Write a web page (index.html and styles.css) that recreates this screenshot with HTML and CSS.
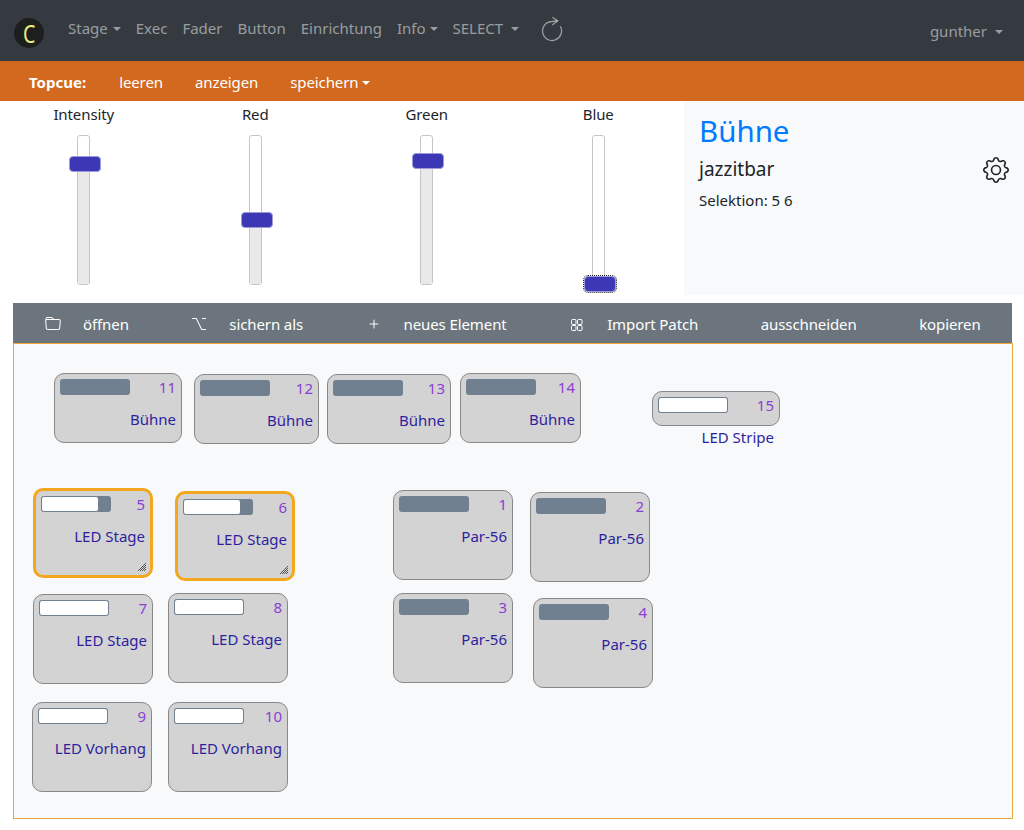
FILE: index.html
```html
<!DOCTYPE html>
<html lang="en">
<head>
    <meta charset="UTF-8">
    <meta name="viewport" content="width=device-width, initial-scale=1.0">
    <title>Bühne</title>
    <link rel="stylesheet" href="styles.css">
</head>
<body>

    <nav class="navbar">
        <span class="logo"><span>C</span></span>
        <a class="nav-link caret first">Stage</a>
        <a class="nav-link">Exec</a>
        <a class="nav-link">Fader</a>
        <a class="nav-link">Button</a>
        <a class="nav-link">Einrichtung</a>
        <a class="nav-link caret">Info</a>
        <a class="nav-link caret wide-caret">SELECT</a>
        <svg class="reload" viewBox="0 0 21 25" fill="none" stroke="currentColor" stroke-width="1.3">
            <path d="M15.500 4 10 4.500A9.500 9.500 0 1 0 18.300 9.300"/>
            <path d="M10.300.3 15.700 3.900 10.300 8"/>
        </svg>
        <a class="nav-link caret wide-caret user">gunther</a>
    </nav>

    <div class="cuebar">
        <b class="cue-title">Topcue:</b>
        <a class="cue-link">leeren</a>
        <a class="cue-link">anzeigen</a>
        <a class="cue-link caret">speichern</a>
    </div>

    <section class="controls">
        <div class="sliders">
            <div class="slider">
                <label>Intensity</label>
                <div class="track">
                    <div class="fill" style="height: 81%"></div>
                    <div class="handle" style="bottom: 81%"></div>
                </div>
            </div>
            <div class="slider">
                <label>Red</label>
                <div class="track">
                    <div class="fill" style="height: 43%"></div>
                    <div class="handle" style="bottom: 43%"></div>
                </div>
            </div>
            <div class="slider">
                <label>Green</label>
                <div class="track">
                    <div class="fill" style="height: 83%"></div>
                    <div class="handle" style="bottom: 83%"></div>
                </div>
            </div>
            <div class="slider">
                <label>Blue</label>
                <div class="track">
                    <div class="handle focused" style="bottom: 0%"></div>
                </div>
            </div>
        </div>
        <aside class="info">
            <h1>Bühne</h1>
            <div class="info-row">
                <h2>jazzitbar</h2>
                <svg class="gear" viewBox="0 0 16 16" fill="currentColor">
                    <path d="M8 4.754a3.246 3.246 0 1 0 0 6.492 3.246 3.246 0 0 0 0-6.492zM5.754 8a2.246 2.246 0 1 1 4.492 0 2.246 2.246 0 0 1-4.492 0z"/>
                    <path d="M9.796 1.343c-.527-1.79-3.065-1.79-3.592 0l-.094.319a.873.873 0 0 1-1.255.52l-.292-.16c-1.64-.892-3.433.902-2.54 2.541l.159.292a.873.873 0 0 1-.52 1.255l-.319.094c-1.79.527-1.79 3.065 0 3.592l.319.094a.873.873 0 0 1 .52 1.255l-.16.292c-.892 1.64.901 3.434 2.541 2.54l.292-.159a.873.873 0 0 1 1.255.52l.094.319c.527 1.79 3.065 1.79 3.592 0l.094-.319a.873.873 0 0 1 1.255-.52l.292.16c1.64.893 3.434-.902 2.54-2.541l-.159-.292a.873.873 0 0 1 .52-1.255l.319-.094c1.79-.527 1.79-3.065 0-3.592l-.319-.094a.873.873 0 0 1-.52-1.255l.16-.292c.893-1.64-.902-3.433-2.541-2.54l-.292.159a.873.873 0 0 1-1.255-.52l-.094-.319zm-2.633.283c.246-.835 1.428-.835 1.674 0l.094.319a1.873 1.873 0 0 0 2.693 1.115l.291-.16c.764-.415 1.6.42 1.184 1.185l-.159.292a1.873 1.873 0 0 0 1.116 2.692l.318.094c.835.246.835 1.428 0 1.674l-.319.094a1.873 1.873 0 0 0-1.115 2.693l.16.291c.415.764-.42 1.6-1.185 1.184l-.291-.159a1.873 1.873 0 0 0-2.693 1.116l-.094.318c-.246.835-1.428.835-1.674 0l-.094-.319a1.873 1.873 0 0 0-2.692-1.115l-.292.16c-.764.415-1.6-.42-1.184-1.185l.159-.291A1.873 1.873 0 0 0 1.945 8.93l-.319-.094c-.835-.246-.835-1.428 0-1.674l.319-.094A1.873 1.873 0 0 0 3.06 4.377l-.16-.292c-.415-.764.42-1.6 1.185-1.184l.292.159a1.873 1.873 0 0 0 2.692-1.115l.094-.319z"/>
                </svg>
            </div>
            <p>Selektion: 5 6</p>
        </aside>
    </section>

    <div class="toolbar">
        <a class="tool">
            <svg viewBox="0 0 16 16" fill="currentColor" fill-rule="evenodd">
                <path d="M9.828 4a3 3 0 0 1-2.12-.879l-.83-.828A1 1 0 0 0 6.173 2H2.5a1 1 0 0 0-1 .981L1.546 4h-1L.5 3a2 2 0 0 1 2-2h3.672a2 2 0 0 1 1.414.586l.828.828A2 2 0 0 0 9.828 3v1z"/>
                <path d="M13.81 4H2.19a1 1 0 0 0-.996 1.09l.637 7a1 1 0 0 0 .995.91h10.348a1 1 0 0 0 .995-.91l.637-7A1 1 0 0 0 13.81 4zM2.19 3A2 2 0 0 0 .198 5.181l.637 7A2 2 0 0 0 2.826 14h10.348a2 2 0 0 0 1.991-1.819l.637-7A2 2 0 0 0 13.81 3H2.19z"/>
            </svg>
            öffnen
        </a>
        <a class="tool">
            <svg viewBox="0 0 16 16" fill="currentColor">
                <path d="M1 2.5a.5.5 0 0 1 .5-.5h3.797a.5.5 0 0 1 .439.26L11 13h3.5a.5.5 0 0 1 0 1h-3.797a.5.5 0 0 1-.439-.26L5 3H1.5a.5.5 0 0 1-.5-.5zm10 0a.5.5 0 0 1 .5-.5h3a.5.5 0 0 1 0 1h-3a.5.5 0 0 1-.5-.5z"/>
            </svg>
            sichern als
        </a>
        <a class="tool">
            <svg viewBox="0 0 16 16" fill="currentColor">
                <path d="M8 3.5a.5.5 0 0 1 .5.5v3.5H12a.5.5 0 0 1 0 1H8.500V12a.5.5 0 0 1-1 0V8.500H4a.5.5 0 0 1 0-1h3.500V4a.5.5 0 0 1 .5-.5z"/>
            </svg>
            neues Element
        </a>
        <a class="tool">
            <svg viewBox="0 0 16 16" fill="none" stroke="currentColor">
                <rect x="2.500" y="3.500" width="4.500" height="5" rx="1"/>
                <rect x="8.500" y="3.500" width="4.500" height="5" rx="1"/>
                <rect x="2.500" y="9.500" width="4.500" height="5" rx="1"/>
                <rect x="8.500" y="9.500" width="4.500" height="5" rx="1"/>
            </svg>
            Import Patch
        </a>
        <a class="tool">ausschneiden</a>
        <a class="tool">kopieren</a>
    </div>

    <main class="stage">
        <div class="card" style="left: 40px; top: 29px; width: 128px"><div class="card-head"><div class="bar"></div><span class="num">11</span></div><div class="name">Bühne</div></div>
        <div class="card" style="left: 180px; top: 30px; width: 125px"><div class="card-head"><div class="bar"></div><span class="num">12</span></div><div class="name">Bühne</div></div>
        <div class="card" style="left: 313px; top: 30px; width: 124px"><div class="card-head"><div class="bar"></div><span class="num">13</span></div><div class="name">Bühne</div></div>
        <div class="card" style="left: 446px; top: 29px; width: 121px"><div class="card-head"><div class="bar"></div><span class="num">14</span></div><div class="name">Bühne</div></div>
        <div class="card short" style="left: 638px; top: 47px; width: 128px"><div class="card-head"><div class="bar"><div class="level" style="width: 100%"></div></div><span class="num">15</span></div><div class="name">LED Stripe</div></div>

        <div class="card tall selected" style="left: 19px; top: 144px">
            <div class="card-head"><div class="bar"><div class="level" style="width: 83%"></div></div><span class="num">5</span></div><div class="name">LED Stage</div>
            <svg class="grip" viewBox="0 0 8 8" stroke="#555"><path d="M0 8 8 0M2 8l6-6M4 8l4-4M6 8l2-2"/></svg>
        </div>
        <div class="card tall selected" style="left: 161px; top: 147px">
            <div class="card-head"><div class="bar"><div class="level" style="width: 83%"></div></div><span class="num">6</span></div><div class="name">LED Stage</div>
            <svg class="grip" viewBox="0 0 8 8" stroke="#555"><path d="M0 8 8 0M2 8l6-6M4 8l4-4M6 8l2-2"/></svg>
        </div>
        <div class="card tall" style="left: 19px; top: 250px"><div class="card-head"><div class="bar"><div class="level" style="width: 100%"></div></div><span class="num">7</span></div><div class="name">LED Stage</div></div>
        <div class="card tall" style="left: 154px; top: 249px"><div class="card-head"><div class="bar"><div class="level" style="width: 100%"></div></div><span class="num">8</span></div><div class="name">LED Stage</div></div>
        <div class="card tall" style="left: 18px; top: 358px"><div class="card-head"><div class="bar"><div class="level" style="width: 100%"></div></div><span class="num">9</span></div><div class="name">LED Vorhang</div></div>
        <div class="card tall" style="left: 154px; top: 358px"><div class="card-head"><div class="bar"><div class="level" style="width: 100%"></div></div><span class="num">10</span></div><div class="name">LED Vorhang</div></div>

        <div class="card tall" style="left: 379px; top: 146px"><div class="card-head"><div class="bar"></div><span class="num">1</span></div><div class="name">Par-56</div></div>
        <div class="card tall" style="left: 516px; top: 148px"><div class="card-head"><div class="bar"></div><span class="num">2</span></div><div class="name">Par-56</div></div>
        <div class="card tall" style="left: 379px; top: 249px"><div class="card-head"><div class="bar"></div><span class="num">3</span></div><div class="name">Par-56</div></div>
        <div class="card tall" style="left: 519px; top: 254px"><div class="card-head"><div class="bar"></div><span class="num">4</span></div><div class="name">Par-56</div></div>
    </main>

</body>
</html>
```

FILE: styles.css
```css
* {
    box-sizing: border-box;
}
body {
    margin: 0;
    font-family: "Noto Sans", "Open Sans", sans-serif;
    font-size: 15px;
    color: #212529;
    background-color: #fff;
}
.caret::after {
    content: "";
    display: inline-block;
    margin-left: 4px;
    vertical-align: 3px;
    border-top: 4px solid;
    border-left: 4px solid transparent;
    border-right: 4px solid transparent;
}
.wide-caret::after {
    margin-left: 8px;
}

/* top navigation */
.navbar {
    display: flex;
    align-items: center;
    height: 61px;
    padding: 0 21px 5px 14px;
    background-color: #343a40;
}
.logo {
    width: 30px;
    height: 30px;
    margin-top: 9px;
    margin-right: 24px;
    border-radius: 50%;
    background-color: #1d1f1f;
    color: #eaee7c;
    font-size: 26px;
    line-height: 30px;
    text-align: center;
}
.logo span {
    display: inline-block;
    transform: scaleX(0.75);
}
.nav-link {
    margin-right: 15px;
    color: rgba(255, 255, 255, 0.5);
    white-space: nowrap;
}
.nav-link.first::after {
    margin-left: 5px;
}
.reload {
    width: 21px;
    height: 25px;
    margin-top: 3px;
    margin-left: 8px;
    color: rgba(255, 255, 255, 0.5);
}
.user {
    margin-left: auto;
    margin-right: 0;
    margin-top: 6px;
}

/* topcue bar */
.cuebar {
    display: flex;
    align-items: center;
    gap: 32px;
    height: 40px;
    padding: 2px 0 0 29px;
    background-color: #d2691e;
    color: #fff;
}
.cue-title {
    margin-right: 1px;
}
.cue-link {
    letter-spacing: -0.1px;
}

/* sliders and info panel */
.controls {
    display: flex;
    height: 194px;
}
.sliders {
    display: grid;
    grid-template-columns: repeat(4, 1fr);
    width: 686px;
    margin-left: -2px;
}
.slider {
    display: flex;
    flex-direction: column;
    align-items: center;
    padding-top: 2px;
}
.slider label {
    line-height: 22px;
    letter-spacing: -0.1px;
}
.track {
    position: relative;
    width: 13px;
    height: 150px;
    margin-top: 10px;
    border: 1px solid #c5c5c5;
    border-radius: 3px;
    background-color: #fff;
}
.fill {
    position: absolute;
    left: 0;
    right: 0;
    bottom: 0;
    background-color: #e9e9e9;
}
.handle {
    position: absolute;
    left: -9px;
    width: 32px;
    height: 16px;
    margin-bottom: -8px;
    border: 1px solid #9c9ad8;
    border-radius: 4px;
    background-color: #3c37b5;
}
.handle.focused {
    outline: 1px dotted #222;
}
.info {
    flex: 1;
    padding: 11px 15px 0;
    background-color: #f8f9fa;
}
.info h1 {
    margin: 0;
    font-size: 29.5px;
    font-weight: 400;
    line-height: 38px;
    color: #007bff;
}
.info-row {
    display: flex;
    align-items: center;
    justify-content: space-between;
    height: 26px;
    margin-top: 7px;
}
.info h2 {
    margin: 0 0 2px;
    font-size: 19px;
    font-weight: 400;
}
.gear {
    width: 26px;
    height: 26px;
}
.info p {
    margin: 7px 0 0;
    font-size: 15px;
}

/* toolbar */
.toolbar {
    display: flex;
    align-items: center;
    gap: 62.5px;
    width: 999px;
    height: 40px;
    margin: 8px 0 0 13px;
    padding: 2px 0 0 32px;
    background-color: #6c757d;
    color: #fff;
    letter-spacing: -0.1px;
}
.tool {
    display: flex;
    align-items: center;
    gap: 22px;
    white-space: nowrap;
}
.tool svg {
    width: 16px;
    height: 16px;
}

/* stage with fixtures */
.stage {
    position: relative;
    width: 1000px;
    height: 476px;
    margin-left: 13px;
    border: 1px solid #e8a93a;
    background-color: #f8f9fa;
}
.card {
    position: absolute;
    height: 70px;
    padding: 5px;
    border: 1px solid #888;
    border-radius: 10px;
    background-color: #d3d3d3;
}
.card.tall {
    width: 120px;
    height: 90px;
}
.card.short {
    height: 35px;
}
.card.selected {
    border: 3px solid #f3a71f;
}
.card-head {
    display: flex;
    justify-content: space-between;
}
.bar {
    width: 70px;
    height: 16px;
    border-radius: 3px;
    background-color: #708090;
    overflow: hidden;
}
.level {
    height: 100%;
    border: 1px solid #708090;
    border-radius: 3px;
    background-color: #fff;
}
.num {
    margin-top: -2px;
    font-size: 15px;
    line-height: 20px;
    color: #8a3fd1;
}
.name {
    margin-top: 12px;
    font-size: 15px;
    line-height: 20px;
    text-align: right;
    white-space: nowrap;
    color: #2e1f9e;
}
.grip {
    position: absolute;
    right: 4px;
    bottom: 4px;
    width: 8px;
    height: 8px;
}
```
